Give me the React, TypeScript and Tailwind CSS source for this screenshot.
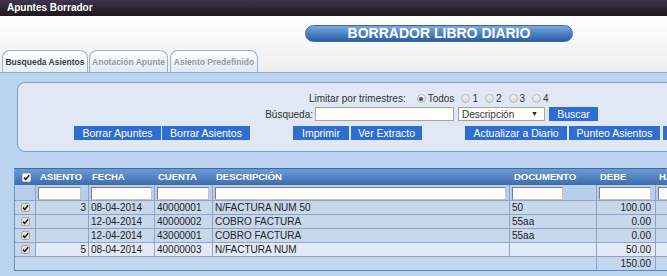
import React from "react"

type Row = {
    asiento: string,
    fecha: string,
    cuenta: string,
    desc: string,
    doc: string,
    debe: string,
    light?: boolean,
}

const rows: Row[] = [
    { asiento: "3", fecha: "08-04-2014", cuenta: "40000001", desc: "N/FACTURA NUM 50", doc: "50", debe: "100.00" },
    { asiento: "", fecha: "12-04-2014", cuenta: "40000002", desc: "COBRO FACTURA", doc: "55aa", debe: "0.00" },
    { asiento: "", fecha: "12-04-2014", cuenta: "43000001", desc: "COBRO FACTURA", doc: "55aa", debe: "0.00" },
    { asiento: "5", fecha: "08-04-2014", cuenta: "40000003", desc: "N/FACTURA NUM", doc: "", debe: "50.00", light: true },
]

const gridCols = "grid grid-cols-[21px_53px_66px_58px_297px_87px_59px_80px]"

function CheckBox({ header }: { header?: boolean }) {
    return (
        <svg width="9" height="9" viewBox="0 0 9 9">
            <rect x="0.5" y="0.5" width="8" height="8" rx="1.5"
                fill={header ? "#ffffff" : "#e2e2e2"} stroke={header ? "#c8d6e8" : "#a8a8a8"} />
            <path d="M2 4.6 L3.7 6.4 L7.2 2.2" fill="none" stroke="#1e1e1e" strokeWidth="1.6" />
        </svg>
    )
}

function Radio({ checked }: { checked?: boolean }) {
    return (
        <span className="w-[9px] h-[9px] shrink-0 rounded-full border border-[#b8b8b8] bg-linear-to-b from-[#f6f6f6] to-[#dadada] flex items-center justify-center">
            {checked && <span className="w-[4px] h-[4px] rounded-full bg-[#505050]" />}
        </span>
    )
}

function Btn({ text, w, ml }: { text: string, w: string, ml: string }) {
    return (
        <div className={`${w} ${ml} shrink-0 h-[14px] bg-[#2f6ed0] text-white text-[10.5px] leading-[14px] text-center whitespace-nowrap overflow-hidden`}>
            {text}
        </div>
    )
}

function FilterInput({ w }: { w: string }) {
    return <div className={`${w} h-[13px] mt-[2px] ml-[2px] bg-white border border-[#7d7d7d] border-r-[#c4c4c4] border-b-[#c4c4c4]`} />
}

export default function App() {
    return (
        <div className="w-[667px] h-[276px] overflow-hidden bg-white font-['Liberation_Sans',Arial,sans-serif]">
            <div className="h-[16px] bg-linear-to-b from-[#40354a] to-[#1e1720] text-white font-bold text-[10px] leading-[16px] pl-[7px]">
                Apuntes Borrador
            </div>

            <div className="h-[56px] bg-linear-to-b from-white to-[#eeeeee] flex flex-col">
                <div className="ml-[305px] mt-[9px] w-[268px] h-[17px] rounded-full border border-[#3a68a5] bg-linear-to-b from-[#7eaadf] via-[#4d81c5] to-[#2e5f9f] text-white font-bold text-[14px] leading-[15px] text-center">
                    BORRADOR LIBRO DIARIO
                </div>
                <div className="flex mt-[8px] pl-[2px] h-[22px] text-[8.5px] font-bold">
                    <div className="w-[86px] shrink-0 rounded-t-[8px] border border-b-0 border-[#97b0d0] bg-linear-to-b from-white to-[#e6eff9] text-[#3c3c3c] flex items-center justify-center pt-[2px]">
                        Busqueda Asientos
                    </div>
                    <div className="w-[79px] shrink-0 ml-[1px] rounded-t-[8px] border border-b-0 border-[#97b0d0] bg-linear-to-b from-white to-[#dde9f5] text-[#9a9a9a] flex items-center justify-center pt-[2px]">
                        Anotación Apunte
                    </div>
                    <div className="w-[88px] shrink-0 ml-[2px] rounded-t-[8px] border border-b-0 border-[#97b0d0] bg-linear-to-b from-white to-[#dde9f5] text-[#9a9a9a] flex items-center justify-center pt-[2px]">
                        Asiento Predefinido
                    </div>
                </div>
            </div>

            <div className="border-t border-[#8eafd6] bg-[#bbd3ef] pt-[9px] h-[204px]">
                <div className="ml-[17px] w-[700px] rounded-[8px] border border-[#7d9cc4] bg-[#dfe8f4] pt-[9px] pb-[11px] text-[10px] text-[#333]">
                    <div className="flex items-center h-[13px] pl-[291px] whitespace-nowrap">
                        <span>Limitar por trimestres:</span>
                        <span className="ml-[11px]"><Radio checked /></span>
                        <span className="ml-[2px]">Todos</span>
                        <span className="ml-[7px]"><Radio /></span>
                        <span className="ml-[2px]">1</span>
                        <span className="ml-[7px]"><Radio /></span>
                        <span className="ml-[2px]">2</span>
                        <span className="ml-[7px]"><Radio /></span>
                        <span className="ml-[2px]">3</span>
                        <span className="ml-[7px]"><Radio /></span>
                        <span className="ml-[2px]">4</span>
                    </div>
                    <div className="flex items-center h-[14px] mt-[2px] pl-[241px] whitespace-nowrap">
                        <span className="w-[54px] shrink-0 text-right">Búsqueda:</span>
                        <div className="ml-[2px] w-[139px] shrink-0 h-[14px] bg-white border border-[#a5a5a5]" />
                        <div className="ml-[4px] w-[87px] shrink-0 h-[14px] bg-white border border-[#a5a5a5] flex items-center pl-[3px] pr-[6px] justify-between">
                            <span>Descripción</span>
                            <span className="text-[7px] text-[#222]">▼</span>
                        </div>
                        <Btn text="Buscar" w="w-[49px]" ml="ml-[4px]" />
                    </div>
                    <div className="flex items-center h-[14px] mt-[5px] pl-[56px]">
                        <Btn text="Borrar Apuntes" w="w-[87px]" ml="ml-0" />
                        <Btn text="Borrar Asientos" w="w-[88px]" ml="ml-[1px]" />
                        <Btn text="Imprimir" w="w-[56px]" ml="ml-[43px]" />
                        <Btn text="Ver Extracto" w="w-[71px]" ml="ml-[2px]" />
                        <Btn text="Actualizar a Diario" w="w-[102px]" ml="ml-[43px]" />
                        <Btn text="Punteo Asientos" w="w-[91px]" ml="ml-[2px]" />
                        <Btn text="" w="w-[80px]" ml="ml-[3px]" />
                    </div>
                </div>

                <div className="ml-[14px] mt-[16px] w-[721px] border-l border-[#6f92c0] text-[10px] text-[#222]">
                    <div className={`${gridCols} h-[17px] border-t border-[#3d69a3] bg-linear-to-b from-[#6c9ad2] to-[#3c6ead] text-white font-bold text-[9.5px] leading-[16px]`}>
                        <div className="flex items-center justify-center pl-[1px]"><CheckBox header /></div>
                        <div className="pl-[4px]">ASIENTO</div>
                        <div className="pl-[3px]">FECHA</div>
                        <div className="pl-[3px]">CUENTA</div>
                        <div className="pl-[3px]">DESCRIPCIÓN</div>
                        <div className="pl-[4px]">DOCUMENTO</div>
                        <div className="pl-[3px]">DEBE</div>
                        <div className="pl-[3px]">HABER</div>
                    </div>

                    <div className={`${gridCols} h-[16px] bg-[#b8cee9] border-b border-[#8aa5c9]`}>
                        <div className="border-r border-[#8aa5c9]" />
                        <div className="border-r border-[#8aa5c9]"><FilterInput w="w-[43px]" /></div>
                        <div className="border-r border-[#8aa5c9]"><FilterInput w="w-[61px]" /></div>
                        <div className="border-r border-[#8aa5c9]"><FilterInput w="w-[52px]" /></div>
                        <div className="border-r border-[#8aa5c9]"><FilterInput w="w-[291px]" /></div>
                        <div className="border-r border-[#8aa5c9]"><FilterInput w="w-[51px]" /></div>
                        <div className="border-r border-[#8aa5c9]"><FilterInput w="w-[52px]" /></div>
                        <div><FilterInput w="w-[52px]" /></div>
                    </div>

                    {rows.map((r, i) =>
                        <div key={i} className={`${gridCols} h-[14px] leading-[13px] border-b border-[#8aa5c9] ${r.light ? "bg-[#e1eaf6]" : "bg-[#c9d7eb]"}`}>
                            <div className="border-r border-[#8aa5c9] bg-[#c9d7eb] flex items-center justify-center pl-[1px]"><CheckBox /></div>
                            <div className="border-r border-[#8aa5c9] text-right pr-[2px]">{r.asiento}</div>
                            <div className="border-r border-[#8aa5c9] pl-[2px]">{r.fecha}</div>
                            <div className="border-r border-[#8aa5c9] pl-[2px]">{r.cuenta}</div>
                            <div className="border-r border-[#8aa5c9] pl-[2px]">{r.desc}</div>
                            <div className="border-r border-[#8aa5c9] pl-[2px]">{r.doc}</div>
                            <div className="border-r border-[#8aa5c9] text-right pr-[4px]">{r.debe}</div>
                            <div />
                        </div>
                    )}

                    <div className={`${gridCols} h-[14px] leading-[13px] bg-[#c4d7ef] border-b border-[#5f87ba]`}>
                        <div className="col-span-6 border-r border-[#8aa5c9]" />
                        <div className="border-r border-[#8aa5c9] text-right pr-[4px]">150.00</div>
                        <div />
                    </div>
                </div>
            </div>
        </div>
    )
}
